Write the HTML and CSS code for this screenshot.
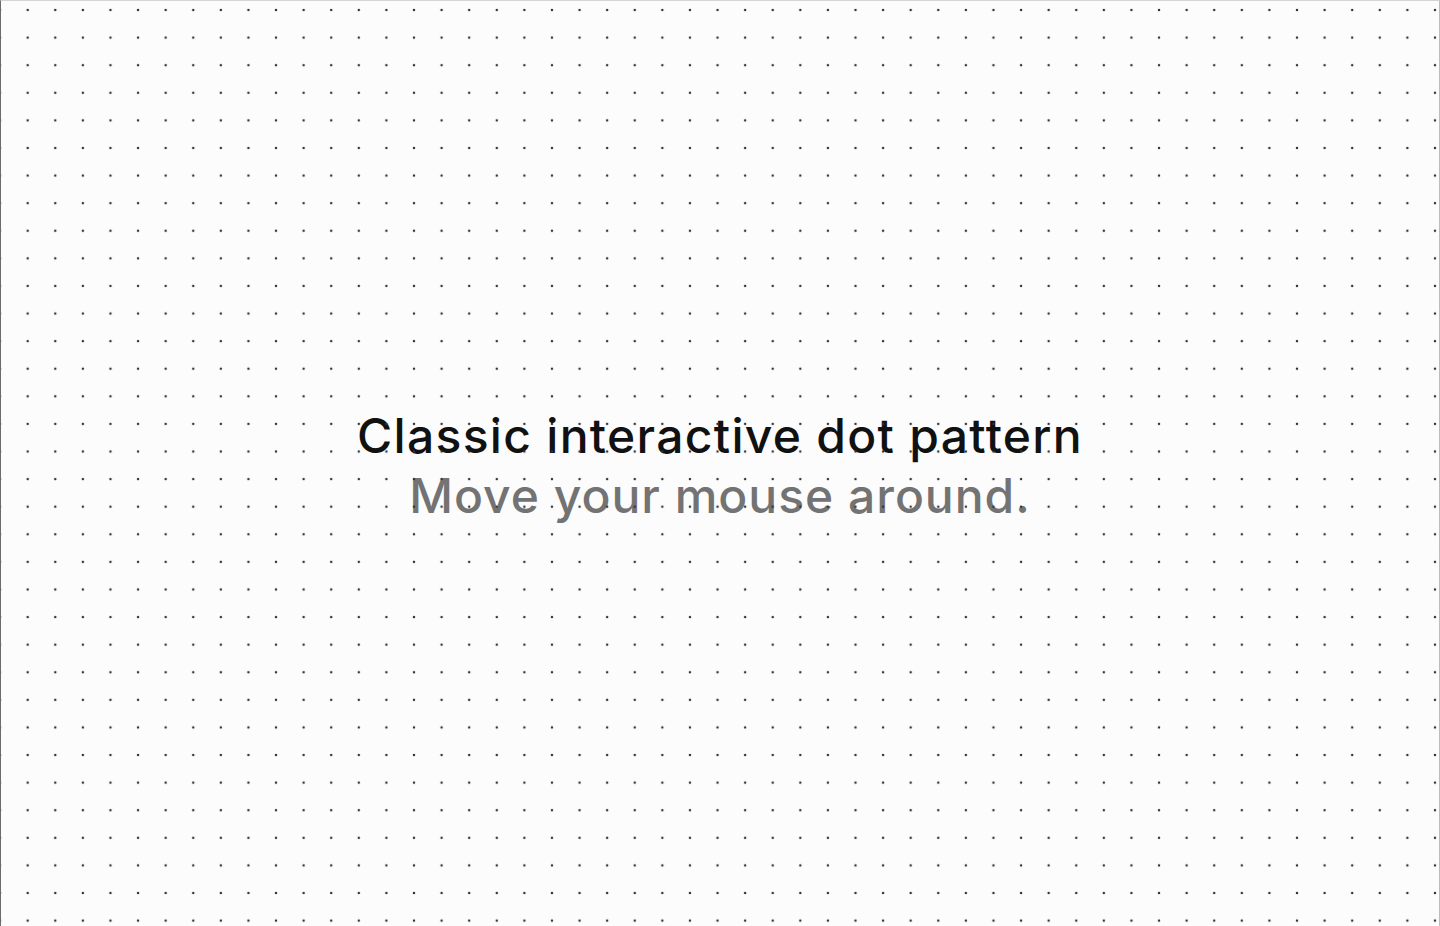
FILE: index.html
```html
<!DOCTYPE html>
<html lang="en">
<head>
  <meta charset="UTF-8">
  <title>Dot pattern</title>
  <link rel="stylesheet" href="styles.css">
</head>
<body>
  <div class="stage">
    <div class="copy">
      <h1 class="title">Classic interactive dot pattern</h1>
      <p class="subtitle">Move your mouse around.</p>
    </div>
  </div>
</body>
</html>
```

FILE: styles.css
```css
html, body {
  margin: 0;
  height: 100%;
}

body {
  font-family: Inter, "Noto Sans", Arial, sans-serif;
  background-color: #fcfcfc;
}

.stage {
  position: relative;
  box-sizing: border-box;
  height: 100%;
  border-top: 1px solid #d4d4d4;
  border-left: 1px solid #6b6b6b;
  border-right: 1px solid #bdbdbd;
  display: flex;
  align-items: center;
  justify-content: center;
  overflow: hidden;
}

/* dot grid sits over the text */
.stage::after {
  content: "";
  position: absolute;
  inset: 0;
  pointer-events: none;
  background-image: radial-gradient(circle, #333 1.2px, transparent 1.6px);
  background-size: 27.6px 27.6px;
  background-position: 12.9px -4.8px;
}

.copy {
  text-align: center;
  padding-top: 4px;
}

.title,
.subtitle {
  margin: 0;
  font-size: 48px;
  line-height: 60px;
  font-weight: 500;
}

.title {
  color: #111111;
  letter-spacing: 1.3px;
}

.subtitle {
  color: #737373;
  letter-spacing: 1px;
}
```
